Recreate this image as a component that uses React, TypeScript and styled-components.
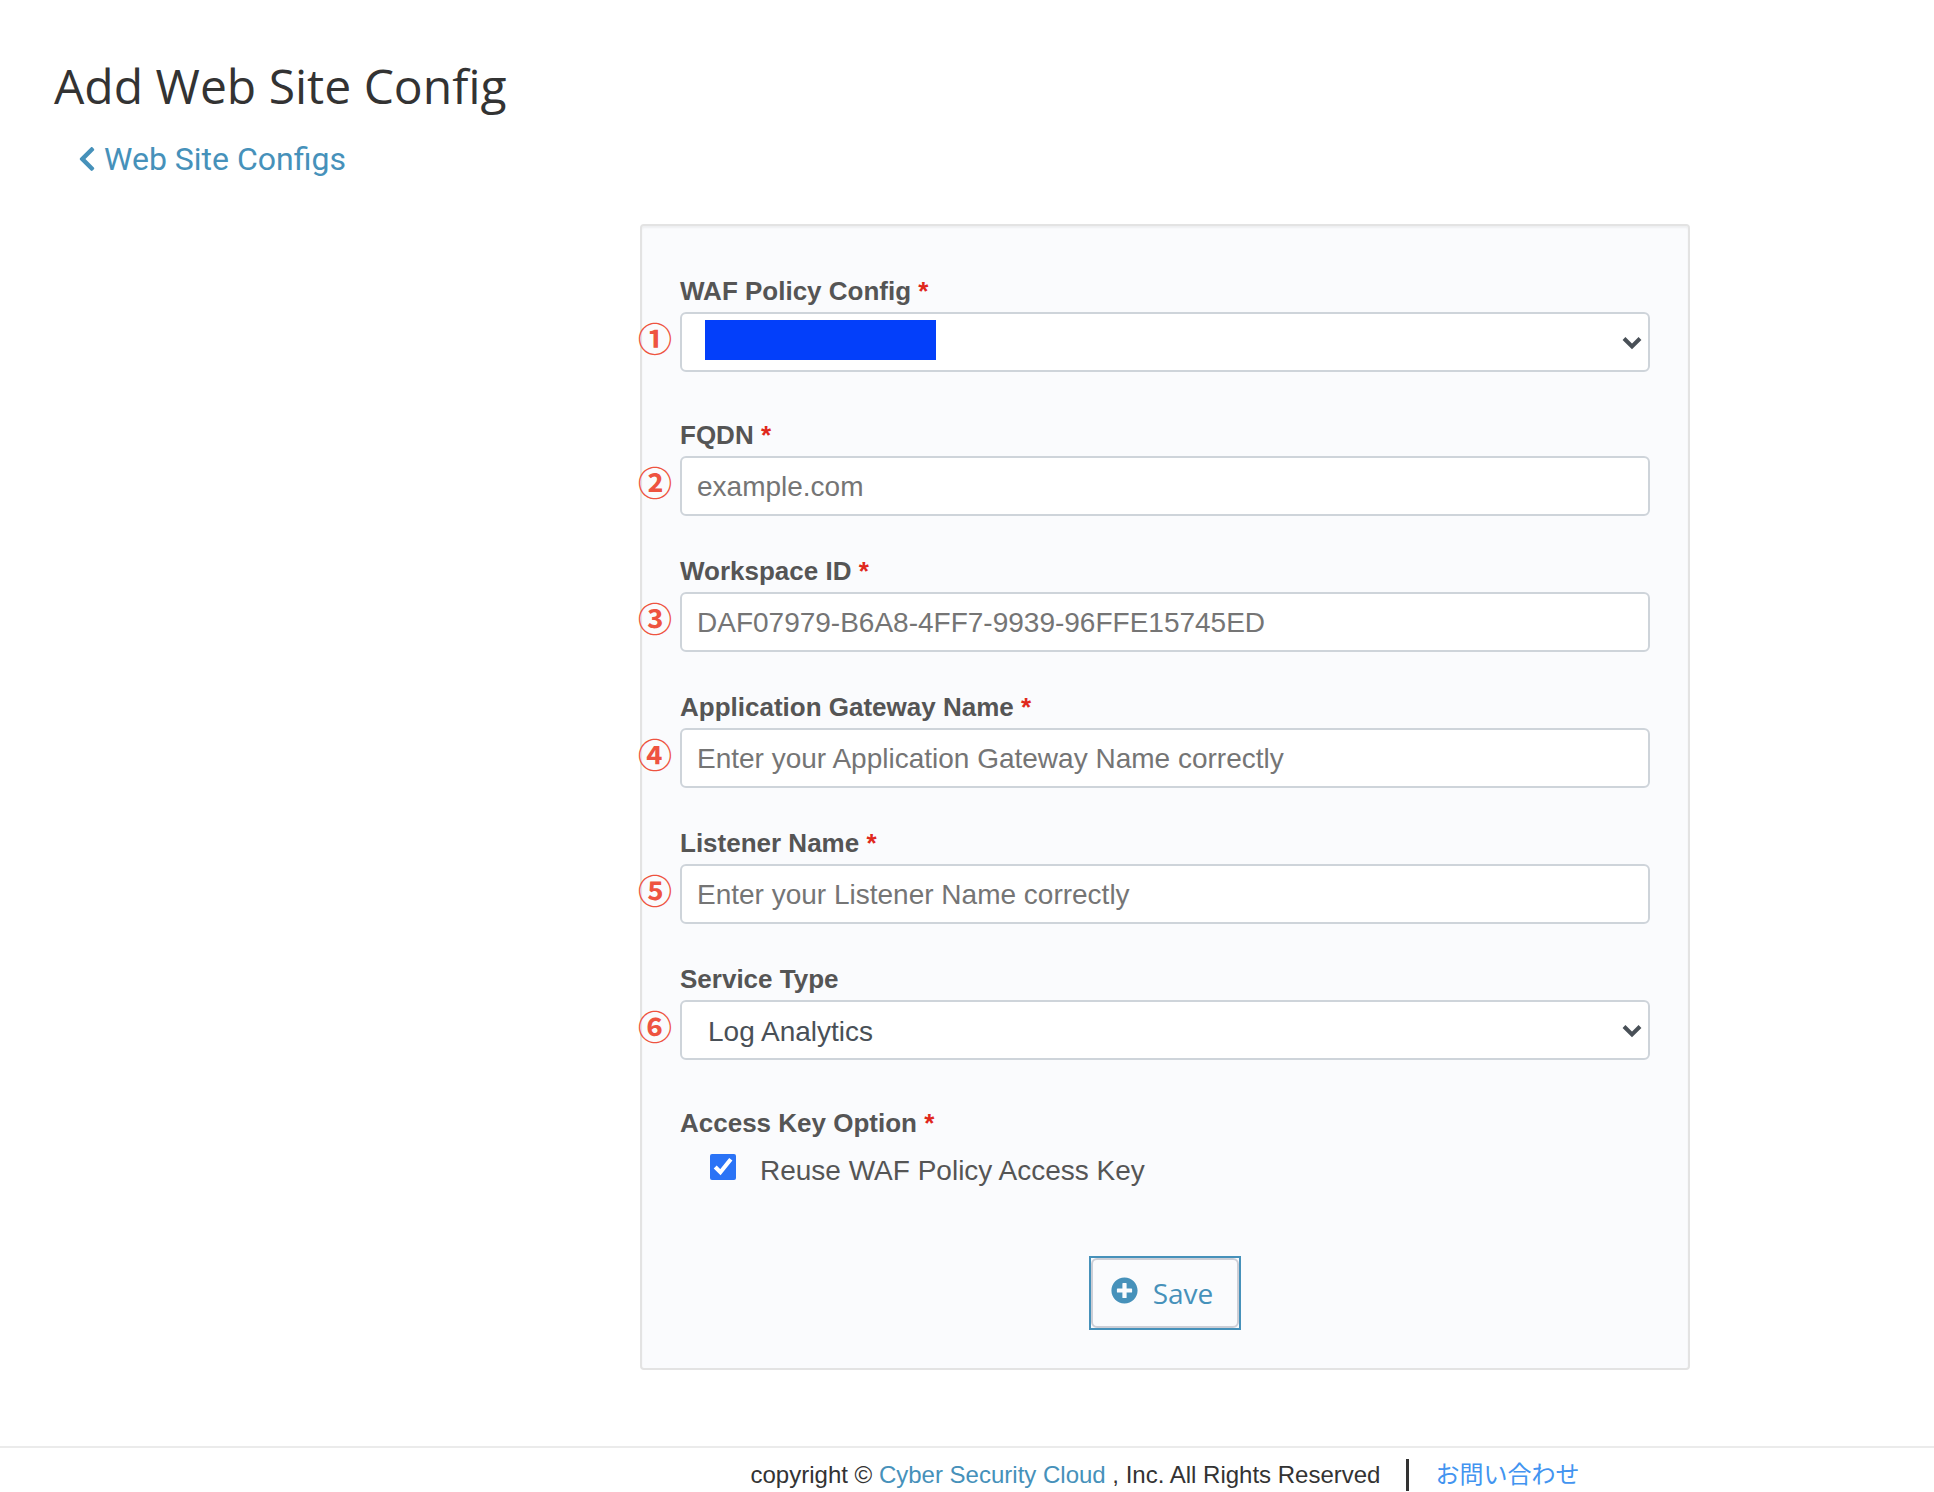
import React, { useState } from "react";
import styled, { createGlobalStyle } from "styled-components";
import { FaChevronLeft, FaPlusCircle } from "react-icons/fa";

const sans = `"Liberation Sans", Arial, "Noto Sans CJK JP", sans-serif`;

const GlobalStyle = createGlobalStyle`
  *, *::before, *::after { box-sizing: border-box; }
  body { margin: 0; background: #fff; color: #333; font-family: ${sans}; font-size: 24px; }
  a { color: #4691ba; text-decoration: none; }
`;

const PageHeader = styled.header`
  padding: 52px 54px 0;
`;

const Title = styled.h1`
  margin: 0;
  font: 400 48px/68px "Open Sans", sans-serif;
`;

const BackLink = styled.a`
  display: inline-flex;
  align-items: center;
  gap: 8px;
  margin: 18px 0 0 24px;
  font: 400 32px/42px Roboto, sans-serif;

  svg { width: 18px; height: 28px; }
`;

const Columns = styled.div`
  display: grid;
  grid-template-columns: 640fr 1050fr 244fr;
`;

const Main = styled(Columns)`
  margin-top: 44px;
`;

const Panel = styled.form`
  grid-column: 2;
  display: flex;
  flex-direction: column;
  padding: 50px 38px 38px;
  background: #fafbfd;
  border: 2px solid #e3e3e3;
  border-radius: 4px;
  box-shadow: inset 0 2px 2px rgba(0, 0, 0, 0.05);
`;

const Field = styled.div<{ $gap: number }>`
  display: flex;
  flex-direction: column;
  margin-bottom: ${(p) => p.$gap}px;
`;

const Label = styled.label`
  height: 36px;
  font-size: 26px;
  font-weight: 700;
  line-height: 30px;
  color: #555;
`;

const Required = styled.span`
  color: #e0281c;
`;

const ControlBox = styled.div`
  position: relative;
  display: flex;
`;

const control = `
  width: 100%;
  height: 60px;
  border: 2px solid #ced4da;
  border-radius: 6px;
  background: #fff;
  font-family: ${sans};
  font-size: 28px;
  color: #495057;
  outline: none;
`;

const TextInput = styled.input`
  ${control}
  padding: 2px 15px 0;
  &::placeholder { color: #757575; opacity: 1; }
`;

const Select = styled.select`
  ${control}
  padding: 2px 48px 0 26px;
  appearance: none;
`;

const Arrow = styled.svg`
  position: absolute;
  right: 8px;
  top: 24px;
  width: 20px;
  height: 14px;
  pointer-events: none;
`;

const Marker = styled.span`
  position: absolute;
  left: -43px;
  top: 8px;
  width: 36px;
  text-align: center;
  font: 700 34px/36px "Noto Sans CJK JP", sans-serif;
  color: #ee5340;
`;

const Redaction = styled.span`
  position: absolute;
  left: 25px;
  top: 8px;
  width: 231px;
  height: 40px;
  background: #033ffa;
`;

const KeyOptions = styled.fieldset`
  margin: 0;
  padding: 0;
  border: 0;
`;

const Legend = styled(Label).attrs({ as: "legend" })`
  padding: 0;
`;

const CheckRow = styled.label`
  display: flex;
  align-items: center;
  gap: 24px;
  padding-left: 30px;
  font-size: 28px;
  line-height: 54px;
  color: #555;
`;

const Checkbox = styled.input`
  width: 26px;
  height: 26px;
  margin: 0 0 8px;
  accent-color: #2a73f6;
`;

const SaveButton = styled.button`
  align-self: center;
  margin-top: 58px;
  padding: 0;
  border: 2px solid #4691ba;
  background: #fafbfd;
  color: #4691ba;
  font: 400 28px/40px "Open Sans", sans-serif;
`;

const SaveFace = styled.span`
  display: flex;
  align-items: center;
  gap: 15px;
  height: 70px;
  padding: 0 24px 0 18px;
  border: 2px solid #ccced6;
  border-radius: 6px;

  svg { width: 27px; height: 27px; margin-bottom: 6px; }
`;

const Footer = styled(Columns).attrs({ as: "footer" })`
  margin-top: 76px;
  border-top: 2px solid #ebebeb;
`;

const FooterText = styled.div`
  grid-column: 2;
  display: flex;
  align-items: center;
  justify-content: center;
  padding-top: 10px;
  line-height: 34px;
  white-space: nowrap;
`;

const Divider = styled.span`
  width: 3px;
  height: 32px;
  margin: 0 26px;
  background: #333;
`;

const ContactLink = styled.a`
  color: #4294f0;
`;

type FieldProps = {
  id: string;
  label: string;
  marker: string;
  required?: boolean;
  gap?: number;
  children: React.ReactNode;
};

function FormField({ id, label, marker, required = true, gap = 40, children }: FieldProps) {
  return (
    <Field $gap={gap}>
      <Label htmlFor={id}>
        {label} {required && <Required>*</Required>}
      </Label>
      <ControlBox>
        <Marker>{marker}</Marker>
        {children}
      </ControlBox>
    </Field>
  );
}

function SelectArrow() {
  return (
    <Arrow viewBox="0 0 20 14" aria-hidden="true">
      <path d="M2 2.5 10 10.5 18 2.5" fill="none" stroke="#495057" strokeWidth="4" />
    </Arrow>
  );
}

const textFields = [
  { id: "fqdn", label: "FQDN", marker: "②", placeholder: "example.com" },
  { id: "workspace", label: "Workspace ID", marker: "③", placeholder: "DAF07979-B6A8-4FF7-9939-96FFE15745ED" },
  { id: "gateway", label: "Application Gateway Name", marker: "④", placeholder: "Enter your Application Gateway Name correctly" },
  { id: "listener", label: "Listener Name", marker: "⑤", placeholder: "Enter your Listener Name correctly" },
];

export default function App() {
  const [reuseKey, setReuseKey] = useState(true);

  return (
    <>
      <GlobalStyle />
      <PageHeader>
        <Title>Add Web Site Config</Title>
        <BackLink href="#configs">
          <FaChevronLeft aria-hidden="true" />
          Web Site Configs
        </BackLink>
      </PageHeader>
      <Main as="main">
        <Panel onSubmit={(e) => e.preventDefault()}>
          <FormField id="policy" label="WAF Policy Config" marker="①" gap={48}>
            <Select id="policy">
              <option></option>
            </Select>
            <Redaction />
            <SelectArrow />
          </FormField>
          {textFields.map((f) => (
            <FormField key={f.id} id={f.id} label={f.label} marker={f.marker}>
              <TextInput id={f.id} type="text" placeholder={f.placeholder} />
            </FormField>
          ))}
          <FormField id="service" label="Service Type" marker="⑥" required={false} gap={48}>
            <Select id="service">
              <option>Log Analytics</option>
            </Select>
            <SelectArrow />
          </FormField>
          <KeyOptions>
            <Legend>
              Access Key Option <Required>*</Required>
            </Legend>
            <CheckRow>
              <Checkbox type="checkbox" checked={reuseKey} onChange={(e) => setReuseKey(e.target.checked)} />
              Reuse WAF Policy Access Key
            </CheckRow>
          </KeyOptions>
          <SaveButton type="submit">
            <SaveFace>
              <FaPlusCircle aria-hidden="true" />
              Save
            </SaveFace>
          </SaveButton>
        </Panel>
      </Main>
      <Footer>
        <FooterText>
          <span>
            copyright © <a href="#company">Cyber Security Cloud</a> , Inc. All Rights Reserved
          </span>
          <Divider />
          <ContactLink href="#contact">お問い合わせ</ContactLink>
        </FooterText>
      </Footer>
    </>
  );
}
